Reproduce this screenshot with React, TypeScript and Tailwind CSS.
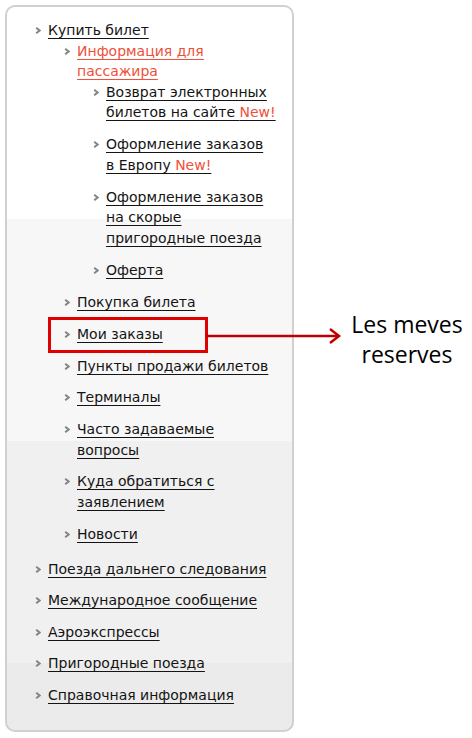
import React from "react";

type Item = { label: React.ReactNode; red?: boolean; children?: Item[] };

const New = () => <span className="text-[#f0503a]">New!</span>;

const tree: Item[] = [
  {
    label: "Купить билет",
    children: [
      {
        label: (
          <>
            Информация для
            <br />
            пассажира
          </>
        ),
        red: true,
        children: [
          {
            label: (
              <>
                Возврат электронных
                <br />
                билетов на сайте <New />
              </>
            ),
          },
          {
            label: (
              <>
                Оформление заказов
                <br />в Европу <New />
              </>
            ),
          },
          {
            label: (
              <>
                Оформление заказов
                <br />
                на скорые
                <br />
                пригородные поезда
              </>
            ),
          },
          { label: "Оферта" },
        ],
      },
      { label: "Покупка билета" },
      { label: "Мои заказы" },
      { label: "Пункты продажи билетов" },
      { label: "Терминалы" },
      {
        label: (
          <>
            Часто задаваемые
            <br />
            вопросы
          </>
        ),
      },
      {
        label: (
          <>
            Куда обратиться с
            <br />
            заявлением
          </>
        ),
      },
      { label: "Новости" },
    ],
  },
  { label: "Поезда дальнего следования" },
  { label: "Международное сообщение" },
  { label: "Аэроэкспрессы" },
  { label: "Пригородные поезда" },
  { label: "Справочная информация" },
];

const Bullet = () => (
  <svg width="6" height="7" viewBox="0 0 6 7" className="mt-[7px] shrink-0">
    <path d="M1.2 0.8 L4.6 3.5 L1.2 6.2" fill="none" stroke="#858585" strokeWidth="2" />
  </svg>
);

function List({ items, level }: { items: Item[]; level: number }) {
  return (
    <ul
      className={
        level === 0
          ? "flex flex-col gap-[11px]"
          : level === 1
          ? "flex flex-col gap-[11.25px] pl-[29px] mb-[3.5px]"
          : "flex flex-col gap-[11.5px] pl-[29px] mb-[0.75px]"
      }
    >
      {items.map((it, i) => (
        <li key={i} className="flex flex-col">
          <div className="flex items-start gap-[7px]">
            <Bullet />
            <a
              className={
                it.red
                  ? "text-[#f0503a] underline decoration-1 underline-offset-[3px]"
                  : "text-[#141414] underline decoration-1 underline-offset-[3px]"
              }
            >
              {it.label}
            </a>
          </div>
          {it.children && <List items={it.children} level={level + 1} />}
        </li>
      ))}
    </ul>
  );
}

export default function App() {
  return (
    <div className="relative w-[472px] h-[738px] bg-white overflow-hidden">
      <div className="pt-[5px] pl-[5px]">
        <div
          className="w-[289px] h-[727px] rounded-[10px] border-2 border-[#d0d0d0] bg-[linear-gradient(to_bottom,#ffffff_0px,#ffffff_212px,#f7f7f7_212px,#f7f7f7_434px,#f0f0f0_434px,#f0f0f0_656px,#ebebeb_656px,#ebebeb_100%)] pt-[13px] pl-[28px] pr-[8px] text-[14px] leading-[20.5px]"
          style={{ fontFamily: '"DejaVu Sans", Verdana, sans-serif' }}
        >
          <List items={tree} level={0} />
        </div>
      </div>

      {/* annotation */}
      <div className="absolute left-[48px] top-[317px] w-[160px] h-[36px] border-[3px] border-[#e00000]" />
      <svg className="absolute left-[206px] top-[327px]" width="136" height="18" viewBox="0 0 136 18">
        <line x1="0" y1="9" x2="132" y2="9" stroke="#c00000" strokeWidth="2.5" />
        <path d="M124 2 L133 9 L124 16" fill="none" stroke="#c00000" strokeWidth="2.5" />
      </svg>
      <div
        className="absolute left-[340px] top-[309px] w-[134px] text-center text-[23px] leading-[30px] text-black"
        style={{ fontFamily: '"Open Sans", Calibri, sans-serif' }}
      >
        Les meves
        <br />
        reserves
      </div>
    </div>
  );
}
